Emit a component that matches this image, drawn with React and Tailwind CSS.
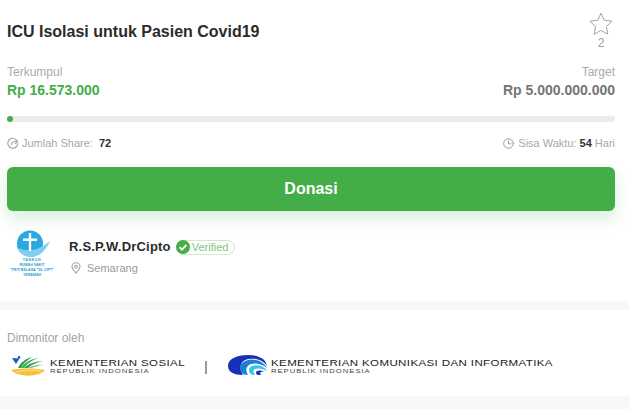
import React from 'react';

const font = { fontFamily: '"Liberation Sans", Arial, sans-serif' };

const StarIcon = () => (
  <svg width="24" height="24" viewBox="0 0 24 24" fill="none" stroke="#a3a3a3" strokeWidth="1" strokeLinejoin="round">
    <path d="M12 1.2 15.3 8.2 23 9.2 17.4 14.5 18.8 22.2 12 18.4 5.2 22.2 6.6 14.5 1 9.2 8.7 8.2Z" />
  </svg>
);

const ShareIcon = () => (
  <svg width="12" height="12" viewBox="0 0 12 12" fill="none" stroke="#a0a0a0" strokeWidth="1.1" strokeLinecap="round" strokeLinejoin="round">
    <path d="M6.5 1.3A5 5 0 1 0 10.8 6.5" />
    <path d="M4.3 7.8C4.8 5.6 6.4 4.4 9.6 4.3" />
    <path d="M8 1.9 10.6 4.2 8.4 6.6" />
  </svg>
);

const ClockIcon = () => (
  <svg width="11" height="11" viewBox="0 0 11 11" fill="none" stroke="#9b9b9b" strokeWidth="1" strokeLinecap="round" strokeLinejoin="round">
    <circle cx="5.5" cy="5.5" r="4.8" />
    <path d="M5.5 2.8V5.8H8" />
  </svg>
);

const PinIcon = () => (
  <svg width="10" height="12" viewBox="0 0 10 12" fill="none" stroke="#a8a8a8" strokeWidth="1.1">
    <path d="M5 11.2C3 8.8 1 7 1 4.8A4 4 0 0 1 9 4.8C9 7 7 8.8 5 11.2Z" />
    <circle cx="5" cy="4.8" r="1.4" />
  </svg>
);

const HospitalLogo = () => (
  <div className="flex w-[40px] flex-col items-center">
    <svg width="38" height="28" viewBox="0 0 38 28">
      <circle cx="17" cy="13.5" r="13" fill="#29a9df" />
      <path d="M3 16C10 22 23 23 37 11 33 21 25 28 16 27 9 26 5 21 3 16Z" fill="#7fd0ec" />
      <path d="M15.8 3H18.2V8.5H24V11H18.2V21H15.8V11H10V8.5H15.8Z" fill="#fff" />
    </svg>
    <div className="whitespace-nowrap text-center text-[3.6px] leading-[5px] font-bold text-[#2a9fc9]">
      <div className="tracking-[0.6px]">TANKUH</div>
      <div>RUMAH SAKIT</div>
      <div>"PETI BELASA "DL CIPT"</div>
      <div>YERAMAH</div>
    </div>
  </div>
);

const KemensosLogo = () => (
  <svg width="36" height="24" viewBox="0 0 36 24">
    <path d="M1 15C10 13 26 13 35 15 30 22 8 23 1 15Z" fill="#f5c13a" />
    <path d="M6 17C14 15 24 15 31 16" fill="none" stroke="#fbe7a8" strokeWidth="0.8" />
    <path d="M8 13C10 8 15 4 22 2 17 5 13 9 11 13Z" fill="#2f9e4f" />
    <path d="M11 13C14 8 20 4 29 3 22 5 17 9 14 13Z" fill="#3fae5c" />
    <path d="M14 13C18 9 25 6 34 6 27 7 21 10 18 13Z" fill="#2f9e4f" />
    <path d="M18 13C22 11 28 9 34 10 29 10 25 12 22 13Z" fill="#7cc576" />
    <path d="M2 3 9.5 3.5 6 9Z" fill="#1b5fbb" />
    <circle cx="9" cy="2.4" r="1.3" fill="#1b5fbb" />
  </svg>
);

const KominfoLogo = () => (
  <svg width="40" height="22" viewBox="0 0 40 22">
    <path d="M0 11C0 4 8 0 20 0 31 0 38 4 39 11 35 5 27 3 21 4 13 5 10 12 15 20 6 20 0 17 0 11Z" fill="#1a2fb8" />
    <path d="M12 13C12 7 20 3 28 5 33 6 37 9 39 13 33 8 27 8 23 9 18 11 17 15 20 20 15 20 12 17 12 13Z" fill="#1c7fd6" />
    <path d="M21 15C21 11 27 9 33 11 36 12 38 14 39 16 34 13 30 13 27 14 25 15 25 17 27 20 23 20 21 18 21 15Z" fill="#35c6ee" />
    <path d="M28 18C28 15 33 15 36 17 33 16 31 17 33 20 30 20 28 20 28 18Z" fill="#1a2fb8" />
  </svg>
);

const MinistryName = ({ name }) => (
  <div className="mb-[2px] origin-left scale-x-[1.28] whitespace-nowrap">
    <div className="text-[9px] leading-[10px] tracking-[0.3px] text-[#222]">{name}</div>
    <div className="text-[6px] leading-[7px] tracking-[0.75px] text-[#444]">REPUBLIK INDONESIA</div>
  </div>
);

const App = () => {
  return (
    <div className="flex h-[409px] w-[629px] flex-col overflow-hidden bg-[#f7f7f7]" style={font}>
      <section className="h-[301px] bg-white pr-[14px] pl-[7px]">
        <div className="flex h-[56px] justify-between pt-[12px]">
          <h1 className="pt-[8px] text-[16px] leading-[24px] font-bold text-[#2b2b2b]">ICU Isolasi untuk Pasien Covid19</h1>
          <div className="mr-[2px] flex w-[24px] flex-col items-center">
            <StarIcon />
            <span className="text-[12px] leading-[14px] text-[#9c9c9c]">2</span>
          </div>
        </div>

        <div className="mt-[9px] flex justify-between">
          <div>
            <div className="text-[12px] leading-[14px] text-[#ababab]">Terkumpul</div>
            <div className="mt-[2px] text-[14px] leading-[18px] font-bold text-[#43ad47]">Rp 16.573.000</div>
          </div>
          <div className="text-right">
            <div className="text-[12px] leading-[14px] text-[#ababab]">Target</div>
            <div className="mt-[2px] text-[14px] leading-[18px] font-bold text-[#757575]">Rp 5.000.000.000</div>
          </div>
        </div>

        <div className="mt-[17px] h-[6px] rounded-full bg-[#ebebeb]">
          <div className="h-[6px] w-[6px] rounded-full bg-[#43ad47]" />
        </div>

        <div className="mt-[14px] flex h-[14px] items-center justify-between text-[11px] leading-[14px] text-[#a8a8a8]">
          <div className="flex items-center">
            <ShareIcon />
            <span className="ml-[3px]">Jumlah Share:</span>
            <span className="ml-[6px] font-bold text-[#333]">72</span>
          </div>
          <div className="flex items-center">
            <ClockIcon />
            <span className="ml-[4px]">Sisa Waktu:</span>
            <span className="ml-[3px] font-bold text-[#333]">54</span>
            <span className="ml-[3px]">Hari</span>
          </div>
        </div>

        <button className="mt-[17px] h-[44px] w-full rounded-[6px] bg-[#43ad47] text-[16px] font-bold text-white shadow-[0_8px_16px_rgba(67,173,71,0.2)]">
          Donasi
        </button>

        <div className="mt-[19px] flex">
          <div className="ml-[5px]"><HospitalLogo /></div>
          <div className="ml-[17px] pt-[8px]">
            <div className="flex items-center">
              <span className="text-[13px] leading-[18px] font-bold tracking-[0.2px] text-[#2b2b2b]">R.S.P.W.DrCipto</span>
              <span className="ml-[5px] flex h-[15px] w-[59px] items-center rounded-full border border-[#cdeacd]">
                <svg width="14" height="14" viewBox="0 0 14 14" className="-ml-px">
                  <circle cx="7" cy="7" r="7" fill="#43ad47" />
                  <path d="M3.6 7.2 6 9.6 10.4 4.8" fill="none" stroke="#fff" strokeWidth="1.8" />
                </svg>
                <span className="ml-[2px] text-[11px] leading-[13px] text-[#7fc482]">Verified</span>
              </span>
            </div>
            <div className="mt-[5px] flex items-center">
              <span className="ml-[2px]"><PinIcon /></span>
              <span className="ml-[6px] text-[11px] leading-[14px] text-[#9a9a9a]">Semarang</span>
            </div>
          </div>
        </div>
      </section>

      <section className="mt-[9px] h-[86px] bg-white px-[7px] pt-[21px]">
        <div className="text-[12px] leading-[14px] text-[#a3a3a3]">Dimonitor oleh</div>
        <div className="mt-[10px] flex h-[24px] items-center">
          <div className="ml-[3px]"><KemensosLogo /></div>
          <div className="ml-[4px] w-[142px]"><MinistryName name="KEMENTERIAN SOSIAL" /></div>
          <div className="ml-[13px] h-[13px] w-[2px] bg-[#999]" />
          <div className="mb-[2px] ml-[21px]"><KominfoLogo /></div>
          <div className="ml-[3px]"><MinistryName name="KEMENTERIAN KOMUNIKASI DAN INFORMATIKA" /></div>
        </div>
      </section>
    </div>
  );
};

export default App;
